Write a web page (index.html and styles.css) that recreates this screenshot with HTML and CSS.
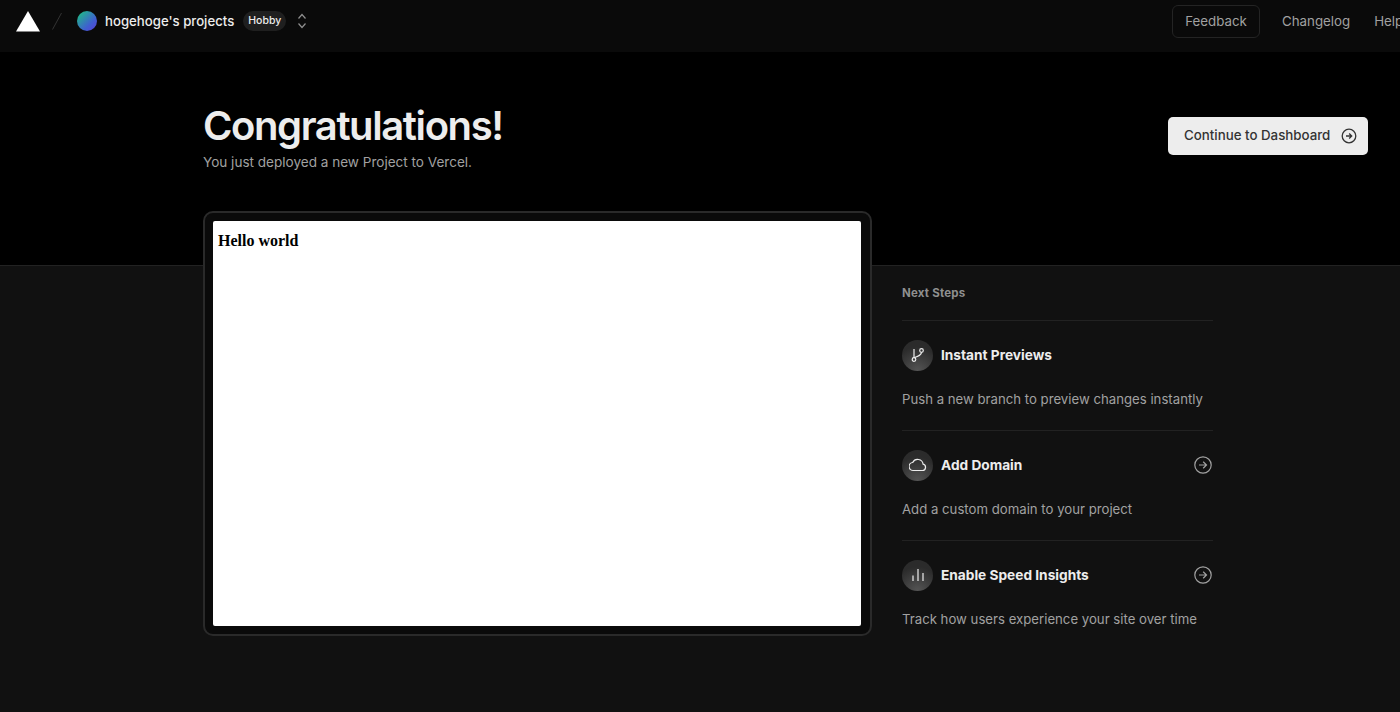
FILE: index.html
```html
<!DOCTYPE html>
<html lang="en">
<head>
<meta charset="utf-8">
<title>Congratulations!</title>
<link rel="stylesheet" href="styles.css">
</head>
<body>
<header class="topbar">
  <div class="crumbs">
    <svg class="logo" width="26" height="22" viewBox="0 0 26 22"><path d="M13 1 25 21.500H1z" fill="#fff"/></svg>
    <svg class="slash" width="12" height="20" viewBox="0 0 12 20"><path d="M10.500 2 1.500 18.500" stroke="#333" stroke-width="1" fill="none"/></svg>
    <span class="avatar"></span>
    <span class="team">hogehoge's projects</span>
    <span class="plan">Hobby</span>
    <svg class="updown" width="10" height="16" viewBox="0 0 10 16" fill="none" stroke="#8f8f8f" stroke-width="1.200"><path d="M1.500 5.500 5 1.500l3.500 4M1.500 10.500 5 14.500l3.500-4"/></svg>
  </div>
  <nav class="topnav">
    <a class="feedback">Feedback</a>
    <a class="navlink">Changelog</a>
    <a class="navlink">Help</a>
  </nav>
</header>

<section class="hero">
  <div class="hero-text">
    <h1>Congratulations!</h1>
    <p>You just deployed a new Project to Vercel.</p>
  </div>
  <a class="continue">Continue to Dashboard
    <svg width="16" height="16" viewBox="0 0 16 16" fill="none" stroke="#333" stroke-width="1.300"><circle cx="8" cy="8" r="6.800"/><path d="M5 8h5.500M8.200 5.500 10.700 8l-2.500 2.500"/></svg>
  </a>
</section>

<main class="content">
  <div class="frame">
    <div class="preview"><strong>Hello world</strong></div>
  </div>
  <aside class="steps">
    <h2>Next Steps</h2>
    <div class="step">
      <div class="step-head">
        <span class="bubble"><svg width="16" height="16" viewBox="0 0 16 16" fill="none" stroke="#ededed" stroke-width="1.200"><circle cx="4" cy="12.500" r="1.800"/><circle cx="11.500" cy="3.500" r="1.800"/><path d="M4 10.700V2M11.500 5.300c0 3-3 4-7.500 5.400"/></svg></span>
        <span class="step-title">Instant Previews</span>
      </div>
      <p>Push a new branch to preview changes instantly</p>
    </div>
    <div class="step">
      <div class="step-head">
        <span class="bubble"><svg width="18" height="14" viewBox="0 0 18 14" fill="none" stroke="#ededed" stroke-width="1.200"><path d="M4.500 12.500h9a3.200 3.200 0 0 0 .6-6.300A5.500 5.500 0 0 0 3.700 4.500 4 4 0 0 0 4.500 12.500z"/></svg></span>
        <span class="step-title">Add Domain</span>
        <svg class="go" width="18" height="18" viewBox="0 0 18 18" fill="none" stroke="#a1a1a1" stroke-width="1.200"><circle cx="9" cy="9" r="8.200"/><path d="M5 9h7.500M9.200 5.800 12.500 9l-3.300 3.200"/></svg>
      </div>
      <p>Add a custom domain to your project</p>
    </div>
    <div class="step">
      <div class="step-head">
        <span class="bubble"><svg width="16" height="16" viewBox="0 0 16 16" fill="none" stroke="#ededed" stroke-width="1.200"><path d="M3 8.500V14M8 2v12M13 6v8"/></svg></span>
        <span class="step-title">Enable Speed Insights</span>
        <svg class="go" width="18" height="18" viewBox="0 0 18 18" fill="none" stroke="#a1a1a1" stroke-width="1.200"><circle cx="9" cy="9" r="8.200"/><path d="M5 9h7.500M9.200 5.800 12.500 9l-3.300 3.200"/></svg>
      </div>
      <p>Track how users experience your site over time</p>
    </div>
  </aside>
</main>
</body>
</html>
```
FILE: styles.css
```css
* { box-sizing: border-box; }
html, body { margin: 0; height: 100%; }
body {
  background: #111;
  color: #ededed;
  font-family: Inter, "Liberation Sans", sans-serif;
  overflow: hidden;
}
.topbar {
  height: 52px;
  background: #0a0a0a;
  display: flex;
  justify-content: space-between;
  align-items: flex-start;
  padding: 5px 0 0 15px;
}
.crumbs { display: flex; align-items: center; height: 32px; }
.logo { margin-right: 10px; }
.slash { margin-right: 14px; }
.avatar {
  width: 20px; height: 20px; border-radius: 50%;
  background: linear-gradient(135deg, #1fb889 10%, #3f5fd0 65%, #5a3fd8);
  margin-right: 8px;
}
.team { font-size: 13.200px; font-weight: 500; color: #ededed; margin-right: 9px; white-space: nowrap; }
.plan {
  font-size: 10.500px; font-weight: 500; color: #ededed;
  background: #1f1f1f; border-radius: 10px; padding: 0 5px; height: 20px; line-height: 20px;
  margin-right: 11px;
}
.topnav { display: flex; align-items: flex-start; width: 228px; overflow: hidden; flex: none; white-space: nowrap; }
.feedback {
  font-size: 13.300px; color: #a1a1a1; border: 1px solid #242424; border-radius: 6px;
  height: 33px; line-height: 31px; width: 88px; text-align: center; flex: none; margin-right: 22px;
}
.navlink { font-size: 13.300px; line-height: 32px; color: #a1a1a1; margin-right: 24px; flex: none; }
.hero {
  height: 214px;
  background: #000;
  border-bottom: 1px solid #222;
  padding: 52px 32px 0 203px;
  display: flex;
  justify-content: space-between;
  align-items: flex-start;
}
h1 { margin: 0; font-size: 40px; line-height: 44px; font-weight: 600; letter-spacing: -1.400px; color: #ededed; }
.hero-text p { margin: 4px 0 0; font-size: 13.550px; line-height: 20px; color: #a1a1a1; }
.continue {
  margin-top: 13px;
  width: 200px; height: 38px; background: #ededed; color: #333; border-radius: 5px;
  font-size: 13.300px; font-weight: 500; padding: 0 0 2px 16px;
  display: flex; align-items: center; gap: 11px;
  white-space: nowrap;
}
.continue svg { margin-top: 2px; }
.content { display: flex; align-items: flex-start; padding-left: 203px; }
.frame {
  width: 669px; height: 425px; margin-top: -55px;
  background: #0a0a0a; border: 2px solid #2a2a2a; border-radius: 10px; padding: 8px 9px 8px 8px;
}
.preview {
  height: 100%; background: #fff; border-radius: 2px; color: #000;
  font-family: "Liberation Serif", serif; font-size: 16px; padding: 10px 5px;
  line-height: 20px;
}
.steps { width: 311px; margin-left: 30px; padding-top: 20px; }
h2 { margin: 0; font-size: 11.500px; line-height: 15px; font-weight: 700; letter-spacing: .2px; color: #8f8f8f; padding-bottom: 19px; }
.step { border-top: 1px solid #222; height: 110px; padding-top: 18px; }
.step-head { display: flex; align-items: center; height: 32px; }
.bubble {
  width: 31px; height: 31px; border-radius: 50%; flex: none;
  background: radial-gradient(circle at 50% 100%, #555, #2b2b2b 70%);
  display: flex; align-items: center; justify-content: center;
  margin-right: 8px;
}
.step-title { font-size: 13.700px; font-weight: 700; color: #ededed; }
.go { margin-left: auto; margin-right: 1px; }
.step p { margin: 18px 0 0; font-size: 13.200px; line-height: 20px; color: #a1a1a1; white-space: nowrap; }
```
